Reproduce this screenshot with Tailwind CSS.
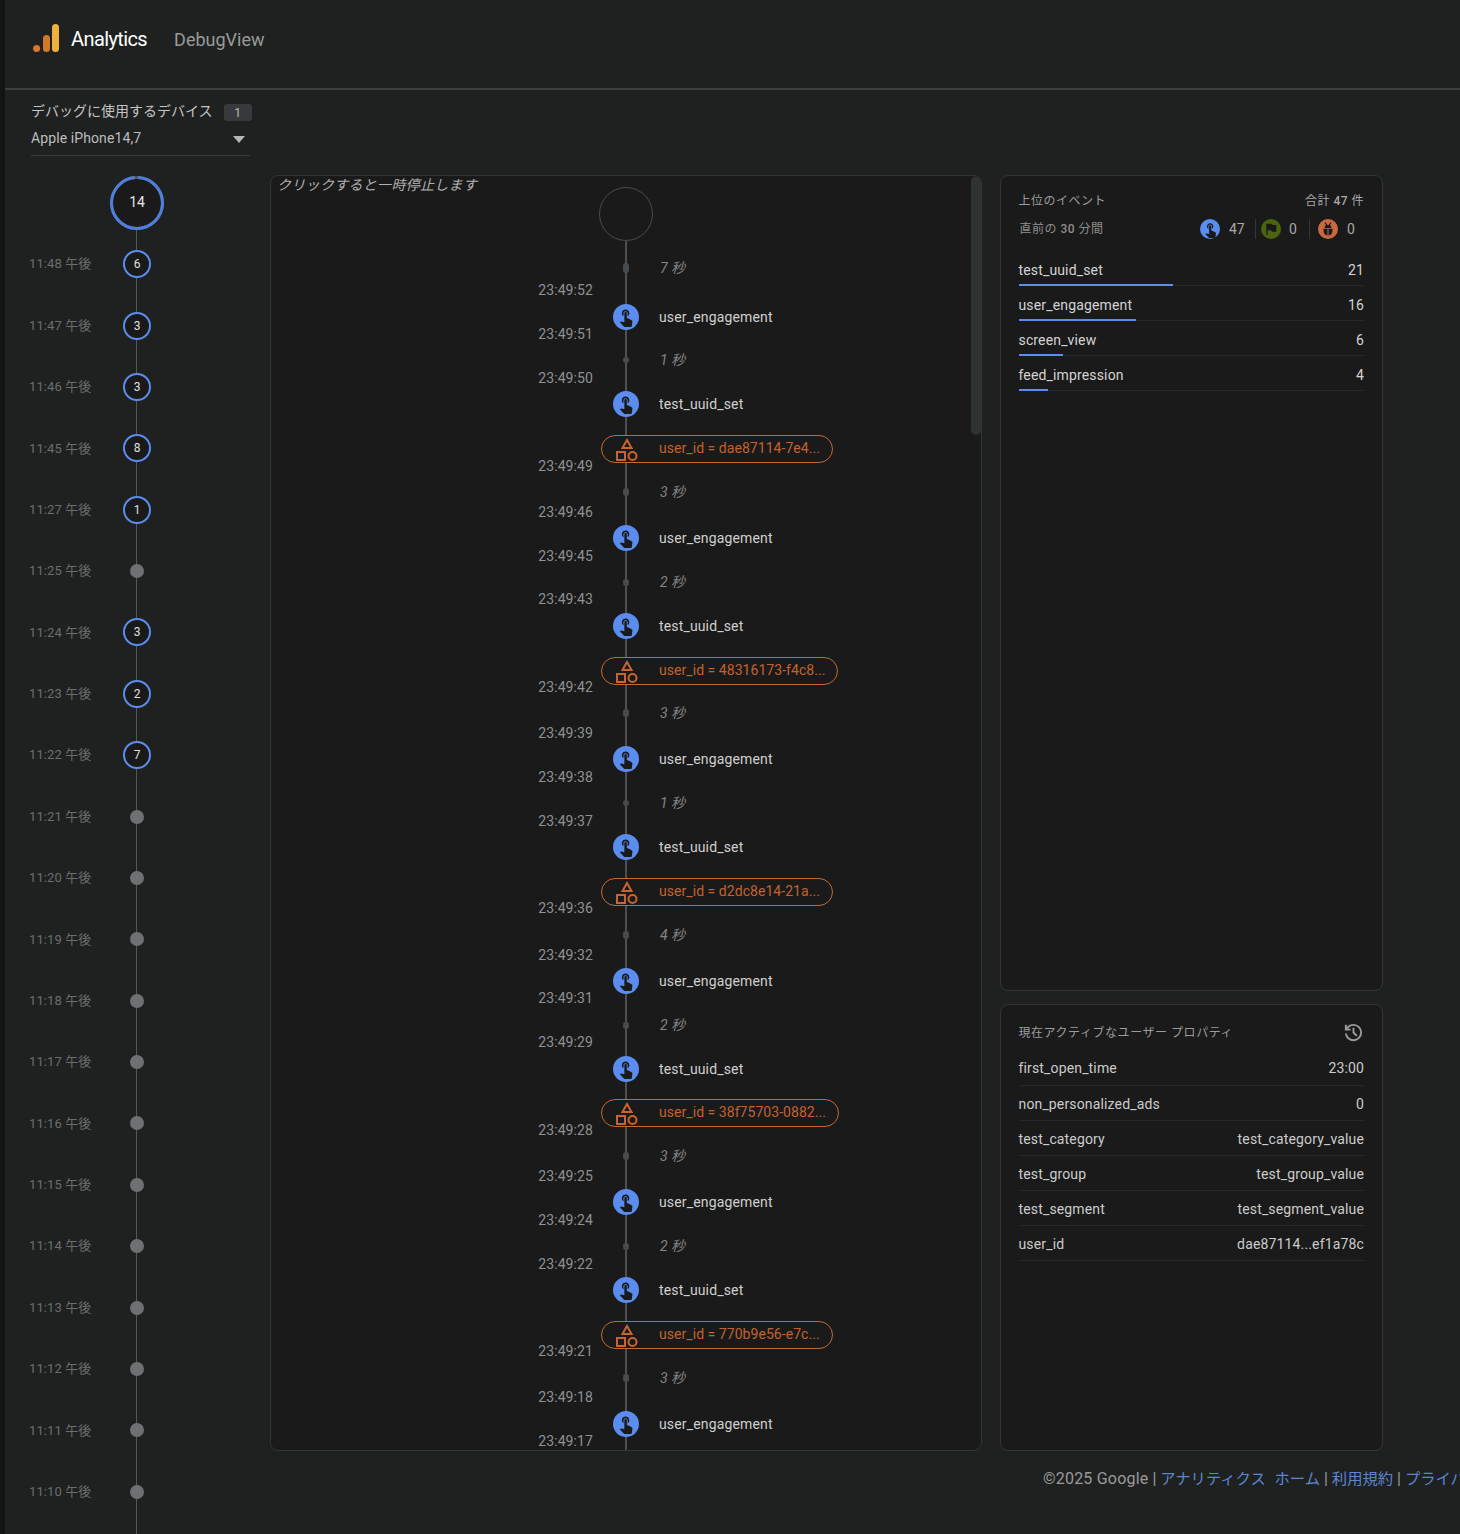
<!DOCTYPE html>
<html lang="ja">
  <head>
    <meta charset="UTF-8" />
    <title>DebugView</title>
    <script src="https://cdn.jsdelivr.net/npm/@tailwindcss/browser@4"></script>
  </head>
  <body class="m-0 bg-[#1f2121] font-['Roboto','Noto_Sans_CJK_JP',sans-serif]">
    <div class="flex w-[1460px] h-[1534px] overflow-hidden">
      <div class="w-[5px] shrink-0 bg-[#131313]"></div>
      <div class="flex-1 min-w-0 flex flex-col">
        <header class="h-[90px] shrink-0 border-b-2 border-[#3d3f40] flex items-center pl-[28px] pb-[8px]">
          <svg class="w-[28px] h-[30px] mt-[-5px]" viewBox="0 0 28 30">
            <circle cx="3.6" cy="25.5" r="3.5" fill="#d9772a" />
            <rect x="10" y="12" width="7" height="17" rx="3.5" fill="#d27829" />
            <rect x="19" y="1" width="7" height="28" rx="3.5" fill="#efb23c" />
          </svg>
          <div class="ml-[10px] text-[20px] tracking-[-0.6px] text-white mt-[-2px]">Analytics</div>
          <div class="ml-[27px] text-[18px] text-[#9a9a9a] mt-[-1px]">DebugView</div>
        </header>

        <div class="flex flex-1 min-h-0">
          <aside class="relative w-[265px] shrink-0">
            <div class="mx-[26px] w-[219px] pt-[11px] border-b border-[#383a3a] h-[66px]">
              <div class="flex items-center h-[20px] whitespace-nowrap">
                <span class="text-[14px] text-[#c4c4c4]">デバッグに使用するデバイス</span>
                <span class="ml-[11px] mt-[3px] w-[28px] h-[17px] shrink-0 rounded-[3px] bg-[#38393c] text-[13px] text-[#b5b5b5] flex items-center justify-center">1</span>
              </div>
              <div class="flex items-center justify-between h-[20px] mt-[7px] pr-[5px]">
                <span class="text-[14px] tracking-[0.1px] text-[#bdbdbd]">Apple iPhone14,7</span>
                <span class="w-0 h-0 border-x-[6.5px] border-x-transparent border-t-[7px] border-t-[#b5b5b5] mt-[2px]"></span>
              </div>
            </div>
            <div class="absolute left-[131px] top-[139px] bottom-0 w-px bg-[#555758]"></div>
            <div class="relative mt-[20px] ml-[105px] w-[54px] h-[54px] rounded-full bg-[#1a1a1a] flex items-center justify-center text-[14px] text-[#e6e6e6]">
              <svg class="absolute inset-0" viewBox="0 0 54 54">
                <circle cx="27" cy="27" r="25.5" fill="none" stroke="#555" stroke-width="3" />
                <circle cx="27" cy="27" r="25.5" fill="none" stroke="#4f7fdc" stroke-width="3" stroke-dasharray="156 4.2" transform="rotate(-88 27 27)" />
              </svg>
              <span class="relative mt-[-1px]">14</span>
            </div>
            <div id="minutes" class="relative mt-[3.5px]"></div>
          </aside>

          <main class="flex-1 min-w-0 pt-[85px]">
            <div class="flex gap-[18px] h-[1276px]">
              <section class="relative w-[712px] h-full shrink-0 rounded-[8px] border border-[#333535] bg-[#1a1a1a] overflow-hidden">
                <div class="absolute left-[6px] top-[-1px] text-[14px] tracking-[0.3px] italic text-[#b0b0b0]">クリックすると一時停止します</div>
                <div class="absolute right-0 top-0 w-[10px] h-[259px] rounded-[5px] bg-[#2f3232]"></div>
                <div class="absolute left-[354px] top-[64px] bottom-0 w-[2px] bg-[#4d4f50]"></div>
                <div class="flex">
                  <div id="times" class="w-[322px] shrink-0"></div>
                  <div class="relative ml-[8px] flex-1 pt-[11px]">
                    <div class="ml-[-2px] w-[54px] h-[54px] rounded-full border border-[#4a4c4c] bg-[#1a1a1a]"></div>
                    <div id="events"></div>
                  </div>
                </div>
              </section>

              <div class="w-[383px] shrink-0 flex flex-col gap-[13px]">
                <section class="h-[816px] rounded-[8px] border border-[#333535] bg-[#1a1a1a] pl-[17.5px] pr-[18px] pt-[16px]">
                  <div class="flex justify-between items-center h-[18px] text-[12px] tracking-[0.5px] text-[#9c9c9c]">
                    <span>上位のイベント</span><span class="text-[#a8a8a8]">合計 <span class="font-medium">47</span> 件</span>
                  </div>
                  <div class="flex items-center h-[24px] mt-[7px] text-[12px] tracking-[0.5px] text-[#8e8e8e]">
                    <span class="ml-[1px]">直前の <span class="font-medium">30</span> 分間</span>
                    <div class="ml-auto flex items-center text-[14px] tracking-normal text-[#a8a8a8]">
                      <span class="w-[20px] h-[20px] rounded-full bg-[#5b8def] flex items-center justify-center">
                        <svg class="w-[17px] h-[17px]" viewBox="0 0 24 24" fill="#1a1a1a"><path d="M9 11.24V7.5C9 6.12 10.12 5 11.5 5S14 6.12 14 7.5v3.74c1.21-.81 2-2.18 2-3.74C16 5.01 13.99 3 11.5 3S7 5.01 7 7.5c0 1.56.79 2.93 2 3.74zm9.84 4.63l-4.54-2.26c-.17-.07-.35-.11-.54-.11H13v-6c0-.83-.67-1.5-1.5-1.5S10 6.67 10 7.5v10.74l-3.43-.72c-.08-.01-.15-.03-.24-.03-.31 0-.59.13-.79.33l-.79.8 4.94 4.94c.27.27.65.44 1.06.44h6.79c.75 0 1.33-.55 1.44-1.28l.75-5.27c.01-.07.02-.14.02-.2 0-.62-.38-1.16-.91-1.38z" /></svg>
                      </span>
                      <span class="ml-[9px] w-[17px]">47</span>
                      <span class="ml-[9px] w-px h-[20px] bg-[#343636]"></span>
                      <span class="ml-[5px] w-[20px] h-[20px] rounded-full bg-[#4c6310] flex items-center justify-center">
                        <svg class="w-[16px] h-[16px]" viewBox="0 0 24 24" fill="#1a1a1a"><path d="M14.4 6L14 4H5v17h2v-7h5.6l.4 2h7V6z" /></svg>
                      </span>
                      <span class="ml-[8px] w-[8px]">0</span>
                      <span class="ml-[12px] w-px h-[20px] bg-[#343636]"></span>
                      <span class="ml-[8px] w-[20px] h-[20px] rounded-full bg-[#c9693f] flex items-center justify-center">
                        <svg class="w-[18px] h-[18px]" viewBox="0 0 24 24" fill="#1a1a1a"><path d="M8 3.5l2.2 3.2M16 3.5l-2.2 3.2" stroke="#1a1a1a" stroke-width="1.6" /><path d="M7.5 10.5a4.5 4.2 0 0 1 9 0z" /><path d="M6 11.7h5.3v8.8C8 20.5 6 17.5 6 14z" /><path d="M12.7 11.7H18V14c0 3.5-2 6.5-5.3 6.5z" /></svg>
                      </span>
                      <span class="ml-[9px] w-[8px]">0</span>
                      <span class="w-[9px]"></span>
                    </div>
                  </div>
                  <div class="mt-[10px] text-[14px] tracking-[0.15px] text-[#d4d4d4]">
                    <div class="relative h-[35px] pt-[9px] border-b border-[#262727] flex justify-between">
                      <span>test_uuid_set</span><span>21</span>
                      <span class="absolute left-0 bottom-[-1px] h-[2px] w-[154px] bg-[#5b8def]"></span>
                    </div>
                    <div class="relative h-[35px] pt-[9px] border-b border-[#262727] flex justify-between">
                      <span>user_engagement</span><span>16</span>
                      <span class="absolute left-0 bottom-[-1px] h-[2px] w-[117px] bg-[#5b8def]"></span>
                    </div>
                    <div class="relative h-[35px] pt-[9px] border-b border-[#262727] flex justify-between">
                      <span>screen_view</span><span>6</span>
                      <span class="absolute left-0 bottom-[-1px] h-[2px] w-[44px] bg-[#5b8def]"></span>
                    </div>
                    <div class="relative h-[35px] pt-[9px] border-b border-[#262727] flex justify-between">
                      <span>feed_impression</span><span>4</span>
                      <span class="absolute left-0 bottom-[-1px] h-[2px] w-[29px] bg-[#5b8def]"></span>
                    </div>
                  </div>
                </section>

                <section class="h-[447px] rounded-[8px] border border-[#333535] bg-[#1a1a1a] pl-[17.5px] pr-[18px] pt-[15px]">
                  <div class="flex justify-between items-center h-[24px] text-[12px] tracking-[0.55px] text-[#9c9c9c]">
                    <span class="mt-[1px]">現在アクティブなユーザー プロパティ</span>
                    <svg class="w-[23px] h-[23px] mr-[-1px] mt-[1px]" viewBox="0 0 24 24" fill="#9a9a9a"><path d="M12 21q-3.45 0-6.012-2.287T3.05 13H5.1q.35 2.6 2.313 4.3T12 19q2.925 0 4.963-2.037T19 12t-2.037-4.962T12 5q-1.725 0-3.225.8T6.25 8H9v2H3V4h2v2.35q1.275-1.6 3.113-2.475T12 3q3.75 0 6.375 2.625T21 12t-2.625 6.375T12 21m2.8-4.8L11 12.4V7h2v4.6l3.2 3.2z" /></svg>
                  </div>
                  <div class="mt-[6px] text-[14px] tracking-[0.15px] text-[#cccccc]">
                    <div class="h-[36px] pt-[8px] border-b border-[#262727] flex justify-between"><span>first_open_time</span><span>23:00</span></div>
                    <div class="h-[35px] pt-[8px] border-b border-[#262727] flex justify-between"><span>non_personalized_ads</span><span>0</span></div>
                    <div class="h-[35px] pt-[8px] border-b border-[#262727] flex justify-between"><span>test_category</span><span>test_category_value</span></div>
                    <div class="h-[35px] pt-[8px] border-b border-[#262727] flex justify-between"><span>test_group</span><span>test_group_value</span></div>
                    <div class="h-[35px] pt-[8px] border-b border-[#262727] flex justify-between"><span>test_segment</span><span>test_segment_value</span></div>
                    <div class="h-[35px] pt-[8px] border-b border-[#262727] flex justify-between"><span>user_id</span><span>dae87114...ef1a78c</span></div>
                  </div>
                </section>
              </div>
            </div>
            <footer class="ml-[773px] mt-[16px] flex items-center gap-[4px] whitespace-nowrap text-[16px] text-[#9a9a9a]">
              <span class="tracking-[0.2px]">©2025 Google</span><span>|</span><a class="text-[15.3px] [word-spacing:5px] text-[#5c86d0]">アナリティクス ホーム</a><span>|</span><a class="text-[15.3px] text-[#5c86d0]">利用規約</a><span>|</span><a class="text-[15.3px] text-[#5c86d0]">プライバシー ポリシー</a>
            </footer>
          </main>
        </div>
      </div>
    </div>

    <script>
      const minutes = [
        ["11:48", 6], ["11:47", 3], ["11:46", 3], ["11:45", 8], ["11:27", 1], ["11:25", 0], ["11:24", 3],
        ["11:23", 2], ["11:22", 7], ["11:21", 0], ["11:20", 0], ["11:19", 0], ["11:18", 0], ["11:17", 0],
        ["11:16", 0], ["11:15", 0], ["11:14", 0], ["11:13", 0], ["11:12", 0], ["11:11", 0], ["11:10", 0],
      ];
      document.getElementById("minutes").innerHTML = minutes
        .map(([time, count]) => `
          <div class="flex items-center h-[61.375px] pl-[24px]">
            <span class="w-[94px] text-[13px] tracking-[0.1px] text-[#6b6d6e]">${time} 午後</span>
            <span class="w-[28px] flex justify-center">
              ${count
                ? `<span class="w-[28px] h-[28px] rounded-full border-2 border-[#5b8def] bg-[#1a1a1a] flex items-center justify-center text-[12px] text-[#e0e0e0]">${count}</span>`
                : `<span class="w-[14px] h-[14px] rounded-full bg-[#6f7071]"></span>`}
            </span>
          </div>`)
        .join("");

      const times = [
        ["23:49:52", "mt-[92px]"], ["23:49:51", ""], ["23:49:50", ""], ["23:49:49", "mt-[44px]"],
        ["23:49:46", "mt-[2px]"], ["23:49:45", ""], ["23:49:43", "-mt-px"], ["23:49:42", "mt-[44px]"],
        ["23:49:39", "mt-[2px]"], ["23:49:38", ""], ["23:49:37", ""], ["23:49:36", "mt-[43px]"],
        ["23:49:32", "mt-[3px]"], ["23:49:31", "-mt-px"], ["23:49:29", ""], ["23:49:28", "mt-[44px]"],
        ["23:49:25", "mt-[2px]"], ["23:49:24", ""], ["23:49:22", ""], ["23:49:21", "mt-[43px]"],
        ["23:49:18", "mt-[2px]"], ["23:49:17", ""],
      ];
      document.getElementById("times").innerHTML = times
        .map(([t, cls]) => `<div class="h-[44px] flex items-center justify-end text-[14px] tracking-[0.1px] text-[#8f9192] ${cls}">${t}</div>`)
        .join("");

      const touch = `<svg class="w-[20px] h-[20px]" viewBox="0 0 24 24" fill="#1a1a1a"><path d="M9 11.24V7.5C9 6.12 10.12 5 11.5 5S14 6.12 14 7.5v3.74c1.21-.81 2-2.18 2-3.74C16 5.01 13.99 3 11.5 3S7 5.01 7 7.5c0 1.56.79 2.93 2 3.74zm9.84 4.63l-4.54-2.26c-.17-.07-.35-.11-.54-.11H13v-6c0-.83-.67-1.5-1.5-1.5S10 6.67 10 7.5v10.74l-3.43-.72c-.08-.01-.15-.03-.24-.03-.31 0-.59.13-.79.33l-.79.8 4.94 4.94c.27.27.65.44 1.06.44h6.79c.75 0 1.33-.55 1.44-1.28l.75-5.27c.01-.07.02-.14.02-.2 0-.62-.38-1.16-.91-1.38z" /></svg>`;
      const shapes = `<svg class="w-[22px] h-[23px]" viewBox="0 0 22 23" fill="none" stroke="#c8642f" stroke-width="2"><path d="M11 2 L6.5 10 H15.5 Z" /><rect x="1" y="14" width="8" height="8" /><circle cx="16.5" cy="18" r="4" /></svg>`;

      function gap(text, dot, cls = "") {
        return `<div class="h-[44px] flex items-center ${cls}">
          <span class="w-[50px] flex justify-center"><span class="w-[6px] ${dot} rounded-full bg-[#474b4e]"></span></span>
          <span class="ml-[9px] text-[14px] italic text-[#858585]">${text}</span>
        </div>`;
      }
      function ev(name, cls = "") {
        return `<div class="h-[44px] flex items-center ${cls}">
          <span class="w-[50px] flex justify-center"><span class="w-[26px] h-[26px] rounded-full bg-[#5b8def] flex items-center justify-center">${touch}</span></span>
          <span class="ml-[8px] text-[14px] tracking-[0.15px] text-[#d0d0d0]">${name}</span>
        </div>`;
      }
      function prop(value, cls = "") {
        return `<div class="h-[44px] flex items-center ${cls}">
          <span class="relative h-[28px] w-fit mt-[2px] pr-[12px] flex items-center rounded-full border border-[#c46a35] bg-[#1a1a1a]">
            <span class="w-[49px] flex justify-center">${shapes}</span>
            <span class="ml-[8px] mb-[2px] text-[14px] tracking-[0.05px] text-[#c4622d]">user_id = ${value}</span>
          </span>
        </div>`;
      }
      const a = "user_engagement", b = "test_uuid_set";
      document.getElementById("events").innerHTML = [
        gap("7 秒", "h-[10px]", "mt-[5px]"), ev(a, "mt-[5px]"), gap("1 秒", "h-[6px]", "-mt-px"), ev(b),
        prop("dae87114-7e4..."), gap("3 秒", "h-[8px]"), ev(a, "mt-[2px]"), gap("2 秒", "h-[7px]"), ev(b),
        prop("48316173-f4c8..."), gap("3 秒", "h-[8px]", "-mt-px"), ev(a, "mt-[2px]"), gap("1 秒", "h-[6px]"), ev(b),
        prop("d2dc8e14-21a..."), gap("4 秒", "h-[8px]"), ev(a, "mt-[2px]"), gap("2 秒", "h-[7px]"), ev(b),
        prop("38f75703-0882...", "-mt-px"), gap("3 秒", "h-[8px]"), ev(a, "mt-[2px]"), gap("2 秒", "h-[7px]"), ev(b),
        prop("770b9e56-e7c..."), gap("3 秒", "h-[8px]"), ev(a, "mt-[2px]"),
      ].join("");
    </script>
  </body>
</html>
